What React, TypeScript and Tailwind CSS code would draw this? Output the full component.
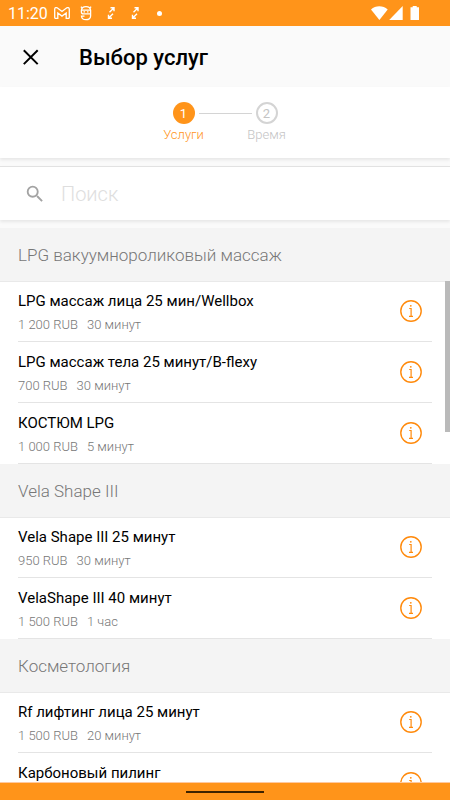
import React, { useState } from "react";

interface Service {
  title: string;
  price: string;
  duration: string;
}

interface Category {
  name: string;
  services: Service[];
}

const CATEGORIES: Category[] = [
  {
    name: "LPG вакуумнороликовый массаж",
    services: [
      { title: "LPG массаж лица 25 мин/Wellbox", price: "1 200 RUB", duration: "30 минут" },
      { title: "LPG массаж тела 25 минут/B-flexy", price: "700 RUB", duration: "30 минут" },
      { title: "КОСТЮМ LPG", price: "1 000 RUB", duration: "5 минут" },
    ],
  },
  {
    name: "Vela Shape III",
    services: [
      { title: "Vela Shape III 25 минут", price: "950 RUB", duration: "30 минут" },
      { title: "VelaShape III 40 минут", price: "1 500 RUB", duration: "1 час" },
    ],
  },
  {
    name: "Косметология",
    services: [
      { title: "Rf лифтинг лица 25 минут", price: "1 500 RUB", duration: "20 минут" },
      { title: "Карбоновый пилинг", price: "", duration: "" },
    ],
  },
];

export default function App() {
  const [query, setQuery] = useState("");

  const matches = (service: Service) =>
    service.title.toLowerCase().includes(query.trim().toLowerCase());

  return (
    <div className="flex h-screen flex-col overflow-hidden bg-[#fafafa] font-['Roboto',sans-serif] text-black">
      <StatusBar />

      <header className="flex h-[61px] shrink-0 items-center gap-[35px] px-5">
        <button type="button" aria-label="Закрыть" className="h-6 w-6">
          <CloseIcon />
        </button>
        <h1 className="pt-0.5 text-[22px] leading-6 font-medium">Выбор услуг</h1>
      </header>

      <Stepper />

      <label className="mt-2 flex h-[54px] shrink-0 items-center gap-[15px] border-t border-[#e2e2e2] bg-white px-6 shadow-[0_2px_3px_rgba(0,0,0,0.08)]">
        <SearchIcon />
        <input
          type="text"
          placeholder="Поиск"
          aria-label="Поиск"
          value={query}
          onChange={(e) => setQuery(e.target.value)}
          className="min-w-0 flex-1 bg-transparent text-xl font-light outline-none placeholder:text-[#dedede]"
        />
      </label>

      <main className="relative mt-2 min-h-0 flex-1 bg-white">
        <div className="h-full overflow-y-auto [scrollbar-width:none]">
          {CATEGORIES.map((category) => (
            <CategorySection
              key={category.name}
              name={category.name}
              services={category.services.filter(matches)}
            />
          ))}
        </div>
        <div className="absolute top-[53px] right-0 h-[151px] w-[5px] bg-[#bababa]" />
      </main>

      <footer className="flex h-[18px] shrink-0 items-center justify-center border-t border-[#ffc9a0] bg-[#ff941a]">
        <div className="h-[2px] w-[78px] bg-[#3d2200]" />
      </footer>
    </div>
  );
}

const StatusBar = () => (
  <div className="flex h-[26px] shrink-0 items-center justify-between bg-[#ff941a] pr-[30px] pl-2 text-white">
    <div className="flex items-center">
      <span className="w-[46px] pt-0.5 text-base leading-5">11:20</span>
      <MailIcon />
      <FaceIcon />
      <ArrowsIcon />
      <ArrowsIcon />
      <span className="ml-[17px] h-[5px] w-[5px] rounded-full bg-white" />
    </div>
    <DeviceIcons />
  </div>
);

const Stepper = () => (
  <ol className="flex h-[71px] shrink-0 justify-center bg-white pt-[15px] shadow-[0_2px_3px_rgba(0,0,0,0.08)]">
    <li className="flex w-[42px] flex-col items-center text-[#ff941a]">
      <span className="flex h-[22px] w-[22px] items-center justify-center rounded-full bg-[#ff941a] pt-0.5 text-[13px] text-white">
        1
      </span>
      <span className="text-[13px] leading-[21px] font-light">Услуги</span>
    </li>
    <li aria-hidden="true" className="-mx-[6px] mt-[11px] h-px w-[53px] bg-[#d4d4d4]" />
    <li className="flex w-[42px] flex-col items-center text-[#c4c4c4]">
      <span className="flex h-[22px] w-[22px] items-center justify-center rounded-full border-2 border-[#d4d4d4] pt-0.5 text-[13px]">
        2
      </span>
      <span className="text-[13px] leading-[21px] font-light">Время</span>
    </li>
  </ol>
);

/**
 * Grey category heading followed by its services.
 */
const CategorySection: React.FC<Category> = ({ name, services }) => (
  <section>
    <h2 className="flex h-[54px] items-center border-b border-[#e9e9e9] bg-[#f4f4f4] px-[18px] pt-0.5 text-[17px] font-light text-[#777777]">
      {name}
    </h2>
    <ul className="-mt-px">
      {services.map((service) => (
        <ServiceRow key={service.title} {...service} />
      ))}
    </ul>
  </section>
);

const ServiceRow: React.FC<Service> = ({ title, price, duration }) => (
  <li className="flex h-[61px] px-[18px]">
    <div className="flex flex-1 items-center justify-between border-b border-[#e4e4e4] pr-[10px]">
      <div className="pt-0.5">
        <h3 className="text-[15px] leading-6">{title}</h3>
        <p className="flex h-[22px] gap-[9px] text-[13px] leading-6 font-light text-[#777777]">
          <span>{price}</span>
          <span>{duration}</span>
        </p>
      </div>
      <button type="button" aria-label={`Подробнее: ${title}`} className="h-[22px] w-[22px]">
        <InfoIcon />
      </button>
    </div>
  </li>
);

const CloseIcon = () => (
  <svg viewBox="0 0 24 24" className="h-6 w-6" fill="none" stroke="currentColor" strokeWidth="2">
    <path d="M3.8 5.2 17.7 19.1M17.7 5.2 3.8 19.1" />
  </svg>
);

const SearchIcon = () => (
  <svg viewBox="0 0 24 24" className="h-[22px] w-[22px] shrink-0" fill="#a3a3a3">
    <path d="M15.5 14h-.79l-.28-.27A6.47 6.47 0 0 0 16 9.5 6.5 6.5 0 1 0 9.5 16c1.61 0 3.09-.59 4.23-1.57l.27.28v.79l5 4.99L20.49 19l-4.99-5zm-6 0C7.01 14 5 11.99 5 9.5S7.01 5 9.5 5 14 7.01 14 9.5 11.99 14 9.5 14z" />
  </svg>
);

const InfoIcon = () => (
  <svg viewBox="0 0 22 22" className="h-[22px] w-[22px]" fill="none" stroke="#ff8a0c">
    <circle cx="11" cy="11" r="10.2" strokeWidth="1.4" />
    <path d="M9.2 8.5h1.9v7.5M9 16.3h4" strokeWidth="1.2" />
    <circle cx="10.8" cy="5.8" r="0.9" fill="#ff8a0c" stroke="none" />
  </svg>
);

const MailIcon = () => (
  <svg viewBox="0 0 16 12" className="h-3 w-4" fill="none" stroke="currentColor" strokeWidth="1.3">
    <path d="M.7 2.2v8.2q0 1 1 1h2.1V6L8 9.1 12.2 6v5.4h2.1q1 0 1-1V2.2C15.3.5 13.7.2 12.5 1L8 4.5 3.5 1C2.3.2.7.5.7 2.2z" />
  </svg>
);

const FaceIcon = () => (
  <svg viewBox="0 0 12 16" className="ml-[10px] h-4 w-3" fill="none" stroke="currentColor" strokeWidth="1.3">
    <path d="M1.4 5.2C1.6 3 3.4 1.7 6 1.7s4.4 1.3 4.6 3.5zM1.4 5.2V7c0 1 .8 1.9 2 1.9h7.2M10.600 5.2V11c0 2.200-1.600 3.700-4.600 3.700S1.700 13.400 1.500 11.200h3" />
    <path d="M3.500 6.900h1.500M7 6.900h1.500M.8 1.800l1.700 1.200M11.200 1.800 9.500 3" />
  </svg>
);

const ArrowsIcon = () => (
  <svg viewBox="0 0 9 14" className="ml-[15px] h-[14px] w-[9px] first-of-type:ml-0" fill="none" stroke="currentColor" strokeWidth="1.4">
    <path d="M3.500 1.700H7v3.500M7 1.700 2.500 6.200M5 12.300H1.500V8.800M1.500 12.300 6 7.800" />
  </svg>
);

// Wi-Fi, signal and battery
const DeviceIcons = () => (
  <svg viewBox="0 0 50 16" className="h-4 w-[50px]" fill="currentColor">
    <path d="M1 4.500C5.500.2 13 .2 17.700 4.500L9.400 15z" />
    <path d="M32.700 1v14H19.200z" />
    <path d="M42.700 1h4v1.300h2.300V15h-8.500V2.300h2.200z" />
  </svg>
);
